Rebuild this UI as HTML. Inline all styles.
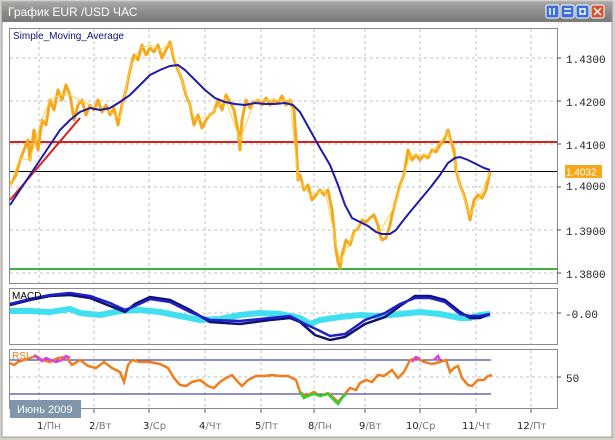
<!DOCTYPE html>
<html><head><meta charset="utf-8"><style>
html,body{margin:0;padding:0;background:#fff;}
body{width:615px;height:440px;overflow:hidden;position:relative;font-family:"Liberation Sans","DejaVu Sans",sans-serif;}
</style></head><body>
<svg width="615" height="440" viewBox="0 0 615 440" xmlns="http://www.w3.org/2000/svg" style="position:absolute;left:0;top:0">
<defs>
<linearGradient id="tb" x1="0" y1="0" x2="0" y2="1"><stop offset="0" stop-color="#a8a8a8"/><stop offset="0.5" stop-color="#8c8c8c"/><stop offset="1" stop-color="#7a7a7a"/></linearGradient>
</defs>
<rect x="0" y="0" width="615" height="440" fill="#d4d0c8"/>
<rect x="2" y="2" width="610" height="435" fill="#fff" stroke="#9a9a9a"/>
<rect x="2" y="2" width="610" height="20" fill="url(#tb)"/>
<text x="8" y="16" font-size="12" fill="#fff" font-family="Liberation Sans, sans-serif">График EUR /USD  ЧАС</text>
<g stroke="#fff" stroke-width="1">
<rect x="546" y="5" width="13" height="13" rx="2" fill="#3b6fd8"/>
<rect x="561" y="5" width="13" height="13" rx="2" fill="#3b6fd8"/>
<rect x="576" y="5" width="13" height="13" rx="2" fill="#3b6fd8"/>
<rect x="591" y="5" width="13" height="13" rx="2" fill="#d8502c"/>
</g>
<path d="M550 8v7M554 8v7M564 9h7M564 13h7M580 9h5v5h-5z" stroke="#fff" stroke-width="1.5" fill="none"/>
<path d="M594 8l7 7M601 8l-7 7" stroke="#fff" stroke-width="1.5"/>

<g fill="none" stroke="#8a8a8a">
<rect x="9.5" y="28.5" width="548" height="255"/>
<rect x="9.5" y="288.5" width="548" height="56"/>
<rect x="9.5" y="349.5" width="548" height="59"/>
</g>
<g stroke="#c0c0c0" stroke-dasharray="3,3">
<path d="M39 29v254M94 29v254M149 29v254M205 29v254M261 29v254M314 29v254M365 29v254M420 29v254M476 29v254M531 29v254"/>
<path d="M39 289v55M94 289v55M149 289v55M205 289v55M261 289v55M314 289v55M365 289v55M420 289v55M476 289v55M531 289v55"/>
<path d="M39 350v58M94 350v58M149 350v58M205 350v58M261 350v58M314 350v58M365 350v58M420 350v58M476 350v58M531 350v58"/>
<path d="M10 58h547M10 101h547M10 144h547M10 187h547M10 230h547M10 273h547M10 313h547M10 377h547"/>
</g>
<g stroke="#555">
<path d="M557 58h4M557 101h4M557 144h4M557 187h4M557 230h4M557 273h4M557 313h4M557 377h4"/>
<path d="M39 409v4M94 409v4M149 409v4M205 409v4M261 409v4M314 409v4M365 409v4M420 409v4M476 409v4M531 409v4"/>
</g>
<path d="M10 142h547" stroke="#d8201c" stroke-width="2"/>
<path d="M10 171.5h547" stroke="#000" stroke-width="1"/>
<path d="M10 269h547" stroke="#3cb43c" stroke-width="2"/>
<path d="M10 200L80 118" stroke="#d8201c" stroke-width="2"/>
<polyline fill="none" stroke="#f5a81c" stroke-width="3" stroke-linejoin="round" points="10,185 16,175 20,160 24,150 28,140 30,160 34,130 38,150 42,120 46,125 50,100 54,110 58,90 62,100 66,85 70,95 74,120 78,105 82,100 86,115 90,105 94,110 98,100 102,112 106,105 110,115 114,108 118,125 122,105 126,90 130,70 134,55 138,60 142,45 146,55 150,48 154,52 158,45 162,58 166,50 170,42 174,60 178,70 182,80 186,95 190,105 194,125 198,115 202,128 206,120 210,115 214,112 218,100 222,110 226,95 230,102 234,110 238,130 240,150 242,120 246,100 250,108 254,102 258,100 262,105 266,98 270,105 274,100 278,103 282,96 286,105 290,100 294,110 296,140 298,180 300,175 304,190 308,185 312,200 316,195 320,190 324,195 328,190 332,210 334,230 336,250 338,262 340,268 342,255 346,240 350,245 354,232 358,228 362,220 366,222 370,218 374,215 378,225 380,235 382,240 386,238 390,225 392,215 396,200 400,185 404,175 408,150 412,160 416,155 420,160 424,155 428,158 432,150 436,152 440,145 444,140 448,130 450,138 454,150 456,170 460,185 464,195 468,210 470,220 474,200 478,195 482,198 486,190 490,172"/>
<polyline fill="none" stroke="#ffd24a" stroke-width="1" points="10,185 20,158 30,160 40,125 50,100 60,95 70,95 80,100 95,108 110,112 120,118 130,68 140,48 150,45 160,50 170,44 180,75 195,120 210,116 225,98 240,140 255,100 275,100 290,100 298,178 310,195 325,190 340,262 360,222 380,232 395,205 410,155 430,155 448,132 460,185 470,215 480,196 490,172"/>
<polyline fill="none" stroke="#1c1ca8" stroke-width="2" points="10,205 20,190 30,175 40,160 50,145 60,130 70,120 80,112 90,108 100,110 110,108 120,102 130,95 140,85 150,75 160,70 170,66 178,65 185,70 195,80 205,90 215,98 225,102 235,104 245,105 255,103 265,104 275,104 285,103 293,105 300,112 310,130 320,148 330,165 338,185 345,205 352,218 360,222 368,226 376,232 382,234 390,234 396,230 402,222 410,212 420,200 430,188 440,175 448,163 455,158 460,157 468,160 476,164 484,168 490,170"/>
<rect x="565" y="165" width="37" height="13" fill="#f5a81c"/>
<text x="566" y="175.5" font-size="10" fill="#fff" font-family="Liberation Sans, sans-serif">1.4032</text>
<g font-size="11" fill="#222" font-family="Liberation Mono, monospace">
<text x="566" y="63">1.4300</text><text x="566" y="106">1.4200</text><text x="566" y="149">1.4100</text><text x="566" y="190">1.4000</text><text x="566" y="235">1.3900</text><text x="566" y="278">1.3800</text>
<text x="565" y="318">-0.00</text><text x="566" y="382">50</text>
</g>
<text x="13" y="39" font-size="10" fill="#101080">Simple_Moving_Average</text>
<polyline fill="none" stroke="#40e0f0" stroke-width="6" points="10,311 30,311 50,312 70,309 80,313 100,315 120,311 140,310 160,312 180,316 200,320 220,319 240,315 260,313 280,314 300,318 310,324 320,320 340,317 360,315 380,316 400,314 420,312 440,314 460,318 470,318 480,315 490,314"/>
<polyline fill="none" stroke="#101070" stroke-width="2.5" points="10,305 30,300 50,296 70,295 90,298 110,306 125,312 135,304 150,297 170,300 190,310 210,322 240,324 270,320 290,318 300,322 315,335 330,340 345,337 365,324 385,317 400,306 415,296 430,296 445,300 460,312 470,318 480,318 490,314"/>
<polyline fill="none" stroke="#2020c8" stroke-width="2.5" points="10,304 30,299 50,295 70,293 90,296 110,303 125,310 135,306 150,299 170,302 190,312 210,320 240,321 270,318 290,316 305,324 318,330 330,336 345,334 365,320 385,313 400,304 415,298 430,298 445,302 460,314 470,316 480,316 490,314"/>
<text x="12" y="299" font-size="10" fill="#000">MACD</text>
<path d="M10 360h481M10 394h481" stroke="#1c1c90" stroke-width="1"/>
<polyline fill="none" stroke="#f07e1c" stroke-width="2.5" points="10,363 14,365 18,362 30,358 36,356 42,360 50,362 58,358 66,357 72,365 80,360 88,366 96,368 104,362 112,368 120,372 124,382 128,365 132,360 140,362 150,362 160,364 168,368 174,378 180,385 186,386 192,382 200,380 208,386 214,388 220,382 226,378 232,375 238,382 242,386 248,380 256,376 264,376 272,375 280,376 288,376 296,380 300,392 306,396 314,392 320,396 328,393 334,398 338,402 344,395 350,388 356,390 360,383 366,380 372,382 378,375 384,376 392,370 398,378 404,372 410,360 416,358 424,362 432,364 440,362 446,360 450,372 454,368 458,366 462,378 468,385 472,386 478,380 484,380 488,376 492,375"/>
<polyline fill="none" stroke="#e040e0" stroke-width="2.5" points="34,355 38,358 42,361 46,358 56,362 62,360 66,356 70,358"/>
<polyline fill="none" stroke="#e040e0" stroke-width="2.5" points="412,362 416,357 420,359"/>
<polyline fill="none" stroke="#e040e0" stroke-width="2.5" points="434,360 438,356 440,360"/>
<polyline fill="none" stroke="#30d030" stroke-width="2.5" points="300,392 304,398 308,396 314,394 320,396 328,394 334,400 338,404 342,398 346,394"/>
<text x="12" y="359" font-size="10" fill="#f07e1c">RSI</text>
<rect x="10" y="400" width="71" height="18" fill="#7f96aa"/>
<text x="17" y="413" font-size="11" fill="#fff">Июнь 2009</text>
<g font-size="10" fill="#222" font-family="DejaVu Sans, sans-serif">
<text x="37" y="429">1<tspan fill="#777">/Пн</tspan></text>
<text x="89" y="429">2<tspan fill="#777">/Вт</tspan></text>
<text x="143" y="429">3<tspan fill="#777">/Ср</tspan></text>
<text x="199" y="429">4<tspan fill="#777">/Чт</tspan></text>
<text x="255" y="429">5<tspan fill="#777">/Пт</tspan></text>
<text x="308" y="429">8<tspan fill="#777">/Пн</tspan></text>
<text x="359" y="429">9<tspan fill="#777">/Вт</tspan></text>
<text x="406" y="429">10<tspan fill="#777">/Ср</tspan></text>
<text x="462" y="429">11<tspan fill="#777">/Чт</tspan></text>
<text x="517" y="429">12<tspan fill="#777">/Пт</tspan></text>
</g>
</svg>
</body></html>
